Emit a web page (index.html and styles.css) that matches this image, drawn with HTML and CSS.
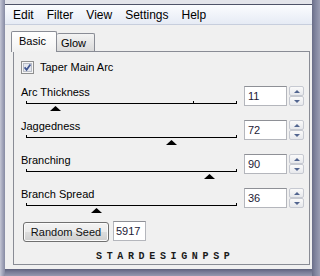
FILE: index.html
```html
<!DOCTYPE html>
<html>
<head>
<meta charset="utf-8">
<link rel="stylesheet" href="styles.css">
</head>
<body>
<div class="frame">
  <div class="win">
    <div class="menubar">
      <span class="mi">Edit</span>
      <span class="mi">Filter</span>
      <span class="mi">View</span>
      <span class="mi">Settings</span>
      <span class="mi">Help</span>
    </div>
    <div class="content">
      <div class="tabstrip">
        <div class="tab active">Basic</div>
        <div class="tab">Glow</div>
      </div>
      <div class="panel">
        <div class="checkrow">
          <svg class="cb" width="13" height="13" viewBox="0 0 13 13">
            <rect x="0.5" y="0.5" width="12" height="12" fill="#f6f6f6" stroke="#8e8f8f"/>
            <rect x="2.5" y="2.5" width="8" height="8" fill="#e4e7ee" stroke="#b9bdc6"/>
            <path d="M3.6 6.4 L5.6 8.8 L9.4 3.6" fill="none" stroke="#3f5591" stroke-width="1.7"/>
          </svg>
          <span>Taper Main Arc</span>
        </div>

        <div class="row">
          <div class="scol">
            <div class="label">Arc Thickness</div>
            <div class="track">
              <div class="line"><span class="tick" style="left:167px"></span></div>
              <svg class="thumb" style="left:29px" width="11" height="5" viewBox="0 0 11 5"><polygon points="5.5,0 11,5 0,5" fill="#000"/></svg>
            </div>
          </div>
          <div class="val">11</div>
          <div class="spin"><div class="sb up"></div><div class="sb down"></div></div>
        </div>

        <div class="row">
          <div class="scol">
            <div class="label">Jaggedness</div>
            <div class="track">
              <div class="line"></div>
              <svg class="thumb" style="left:145px" width="11" height="5" viewBox="0 0 11 5"><polygon points="5.5,0 11,5 0,5" fill="#000"/></svg>
            </div>
          </div>
          <div class="val">72</div>
          <div class="spin"><div class="sb up"></div><div class="sb down"></div></div>
        </div>

        <div class="row">
          <div class="scol">
            <div class="label">Branching</div>
            <div class="track">
              <div class="line"></div>
              <svg class="thumb" style="left:183px" width="11" height="5" viewBox="0 0 11 5"><polygon points="5.5,0 11,5 0,5" fill="#000"/></svg>
            </div>
          </div>
          <div class="val">90</div>
          <div class="spin"><div class="sb up"></div><div class="sb down"></div></div>
        </div>

        <div class="row">
          <div class="scol">
            <div class="label">Branch Spread</div>
            <div class="track">
              <div class="line"></div>
              <svg class="thumb" style="left:70px" width="11" height="5" viewBox="0 0 11 5"><polygon points="5.5,0 11,5 0,5" fill="#000"/></svg>
            </div>
          </div>
          <div class="val">36</div>
          <div class="spin"><div class="sb up"></div><div class="sb down"></div></div>
        </div>

        <div class="seedrow">
          <div class="btn">Random Seed</div>
          <div class="seed">5917</div>
        </div>

        <div class="footer">STARDESIGNPSP</div>
      </div>
    </div>
  </div>
</div>
</body>
</html>
```
FILE: styles.css
```css
html, body {
  margin: 0;
  padding: 0;
}
body {
  width: 320px;
  height: 276px;
  overflow: hidden;
  font-family: "Liberation Sans", Arial, sans-serif;
  font-size: 11px;
  color: #000;
}
.frame {
  width: 320px;
  height: 276px;
  box-sizing: border-box;
  padding: 4px 8px 7px 5px;
  background:
    linear-gradient(to right, #c4c6d4 0, #a9acc0 2px, #868aa2 5px) left top / 5px 100% no-repeat,
    linear-gradient(to right, #6a6e88 0, #7e829c 3px, #9a9db3 8px) right top / 8px 100% no-repeat,
    linear-gradient(#5d617c 0, #787c96 3px, #9598ae 7px) left bottom / 100% 7px no-repeat,
    #e3e4ea;
}
.win {
  height: 265px;
  box-sizing: border-box;
  border-top: 1px solid #4f5368;
  display: flex;
  flex-direction: column;
  background: #f0f0f0;
}
.menubar {
  height: 20px;
  box-sizing: border-box;
  padding: 1px 0 0 8px;
  line-height: 19px;
  font-size: 12px;
  display: flex;
  gap: 13px;
  background: linear-gradient(#fbfcfe, #e6ebf5);
  border-bottom: 1px solid #c7cedd;
}
.content {
  flex: 1;
  padding: 6px 2px 3px 8px;
}
.tabstrip {
  display: flex;
  align-items: flex-start;
  height: 21px;
  margin: 0 0 -1px -2px;
}
.tab {
  box-sizing: border-box;
  border: 1px solid #898c95;
  border-bottom: none;
  border-radius: 2px 2px 0 0;
  line-height: 14px;
  padding-top: 2px;
}
.tab.active {
  position: relative;
  z-index: 1;
  width: 46px;
  height: 21px;
  padding-left: 7px;
  background: linear-gradient(#ffffff, #f6f6f6 70%, #f0f0f0);
}
.tab:not(.active) {
  width: 38px;
  height: 18px;
  margin-top: 2px;
  border-left: none;
  padding-left: 4px;
  background: linear-gradient(#f3f3f3, #e7e7e7 50%, #dadada);
}
.panel {
  height: 214px;
  box-sizing: border-box;
  border: 1px solid #898c95;
  background: #f0f0f0;
  padding: 9px 0 0 7px;
}
.checkrow {
  display: flex;
  align-items: center;
  height: 13px;
  line-height: 13px;
  gap: 6px;
  margin-bottom: 11px;
}
.cb {
  display: block;
}
.row {
  display: grid;
  grid-template-columns: 221px 43px 15px;
  column-gap: 2px;
  align-items: start;
  height: 34px;
}
.scol .label {
  height: 14px;
  line-height: 14px;
}
.track {
  position: relative;
  height: 20px;
  box-sizing: border-box;
  padding: 4px 0 0 5px;
}
.line {
  position: relative;
  width: 211px;
  height: 1px;
  background: #000;
}
.line::before,
.line::after,
.tick {
  content: "";
  position: absolute;
  top: -2px;
  width: 1px;
  height: 3px;
  background: #000;
}
.line::before { left: 0; }
.line::after { right: 0; }
.thumb {
  position: absolute;
  top: 7px;
  display: block;
}
.val, .seed {
  box-sizing: border-box;
  height: 20px;
  background: #fff;
  border: 1px solid #b4b6bc;
  border-top-color: #8e9096;
  line-height: 18px;
  padding-left: 3px;
  color: #1c1a36;
}
.val {
  margin-top: 1px;
}
.spin {
  margin-top: 1px;
  display: flex;
  flex-direction: column;
  height: 20px;
}
.sb {
  box-sizing: border-box;
  height: 10px;
  border: 1px solid #c6c9d1;
  border-radius: 2px;
  background: linear-gradient(#fafafa, #e6e8ec);
  display: flex;
  align-items: center;
  justify-content: center;
}
.sb::after {
  content: "";
  width: 0;
  height: 0;
  border-left: 3px solid transparent;
  border-right: 3px solid transparent;
}
.up::after { border-bottom: 3px solid #52658f; }
.down::after { border-top: 3px solid #52658f; }
.seedrow {
  display: flex;
  align-items: flex-start;
  gap: 4px;
  height: 21px;
  padding-left: 2px;
}
.btn {
  box-sizing: border-box;
  width: 86px;
  height: 20px;
  margin-top: 1px;
  border: 1px solid #707070;
  border-radius: 3px;
  background: linear-gradient(#f3f3f3 0, #ebebeb 50%, #dddddd 51%, #cfcfcf 100%);
  box-shadow: inset 0 0 0 1px #fbfbfb;
  text-align: center;
  line-height: 18px;
  color: #111;
}
.seed {
  width: 33px;
  padding-left: 2px;
}
.footer {
  margin-top: 10px;
  height: 10px;
  line-height: 10px;
  font-family: "Liberation Mono", monospace;
  font-weight: bold;
  font-size: 10px;
  letter-spacing: 4.65px;
  padding-left: 75px;
  color: #1a1a1a;
}
```
